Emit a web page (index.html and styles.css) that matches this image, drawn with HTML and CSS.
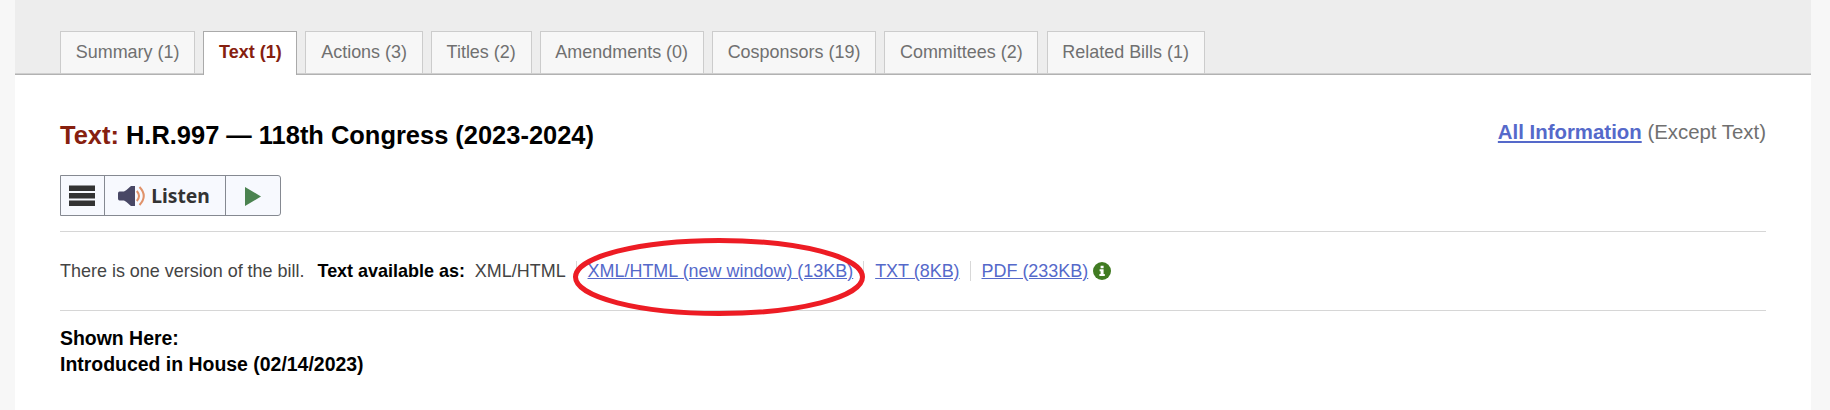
FILE: index.html
```html
<!DOCTYPE html>
<html lang="en">
<head>
<meta charset="utf-8">
<title>Text - H.R.997 - 118th Congress (2023-2024)</title>
<link rel="stylesheet" href="styles.css">
</head>
<body>
<main class="page">
  <nav class="tabs">
    <a class="tab">Summary (1)</a>
    <a class="tab active">Text (1)</a>
    <a class="tab">Actions (3)</a>
    <a class="tab">Titles (2)</a>
    <a class="tab">Amendments (0)</a>
    <a class="tab">Cosponsors (19)</a>
    <a class="tab">Committees (2)</a>
    <a class="tab">Related Bills (1)</a>
  </nav>
  <section class="content">
    <header class="heading">
      <h1 class="title"><span class="label">Text:</span> H.R.997 — 118th Congress (2023-2024)</h1>
      <p class="all-info"><a class="link" href="#">All Information</a> (Except Text)</p>
    </header>
    <div class="reader">
      <button class="reader-menu" aria-label="Menu">
        <svg width="26" height="22" viewBox="0 0 26 22" fill="#333"><path d="M0 .5h26V6H0zM0 8h26v5.500H0zM0 15.500h26V21H0z"/></svg>
      </button>
      <button class="reader-listen">
        <svg width="28" height="22" viewBox="0 0 28 22"><path d="M1.5 6.5H6C9 5.5 11 2 13 1H17V21H13C11 20 9 16.500 6 15.500H1.500Q0 15.500 0 13.500V8.500Q0 6.500 1.500 6.500Z" fill="#484765"/><path d="M18.800 6Q23.200 11 18.800 16M21.500 2Q30 11 21.500 20" fill="none" stroke="#e0926a" stroke-width="2"/></svg>
        <span class="listen">Listen</span>
      </button>
      <button class="reader-play" aria-label="Play">
        <svg width="16" height="19" viewBox="0 0 16 19"><path d="M0 0L16 9.500L0 19Z" fill="#4b8350"/></svg>
      </button>
    </div>
    <div class="versions">
      <span class="count">There is one version of the bill.</span>
      <strong class="available">Text available as:</strong>
      <ul class="formats">
        <li class="format">XML/HTML</li>
        <li class="format circled"><a class="link" href="#">XML/HTML (new window) (13KB)</a>
          <svg class="ring" width="296" height="80" viewBox="0 0 296 80"><ellipse cx="148" cy="40" rx="143.500" ry="36.500" fill="none" stroke="#ed1c24" stroke-width="5"/></svg>
        </li>
        <li class="format"><a class="link" href="#">TXT (8KB)</a></li>
        <li class="format"><a class="link" href="#">PDF (233KB)</a></li>
      </ul>
      <svg class="info" width="18" height="18" viewBox="0 0 18 18"><circle cx="9" cy="9" r="9" fill="#417b22"/><path d="M7.600 3.800h3v2.500h-3zM6.600 7.300h4v4.700h1.200v1.900H6.400V12h1.200V9.200h-1z" fill="#fff"/></svg>
    </div>
    <h2 class="shown">Shown Here:<br>Introduced in House (02/14/2023)</h2>
  </section>
</main>
</body>
</html>
```
FILE: styles.css
```css
* { box-sizing: border-box; }
body {
  margin: 0;
  background: #f7f7f7;
  font-family: "Liberation Sans", Arial, sans-serif;
  font-size: 17.97px;
  color: #444;
}
.page {
  width: 1796px;
  height: 410px;
  margin-left: 15px;
  background: #fff;
  overflow: hidden;
}
.tabs {
  display: flex;
  align-items: flex-end;
  gap: 8.1px;
  height: 75px;
  padding-left: 45px;
  background: #ededed;
  box-shadow: inset 0 -1px #b2b2b2, inset 0 -2px #cfcfcf;
}
.tab {
  height: 43px;
  margin-bottom: 1px;
  padding: 0 14.75px;
  border: 1px solid #ccc;
  border-bottom-color: #cfcfcf;
  background: #f7f7f7;
  color: #707070;
  line-height: 41px;
  white-space: nowrap;
}
.tab.active {
  height: 44px;
  margin-bottom: 0;
  border-color: #aaa;
  border-bottom: 0;
  background: #fff;
  color: #86200f;
  font-weight: bold;
}
.content { padding: 0 45px; }
.heading {
  display: flex;
  justify-content: space-between;
  height: 100px;
  padding-top: 45px;
}
.title {
  margin: 0;
  color: #000;
  font-size: 25.45px;
  line-height: 30px;
}
.label { color: #86200f; }
.all-info {
  margin: 0;
  color: #707070;
  font-size: 20.4px;
  line-height: 24px;
}
.link {
  color: #5569ca;
  text-decoration: underline;
}
.all-info .link { font-weight: bold; }
.reader {
  display: flex;
  width: 221px;
  height: 41px;
  border: 1px solid #858991;
  border-radius: 0 3px 3px 0;
  background: #f7f9fe;
}
.reader button {
  display: flex;
  align-items: center;
  justify-content: center;
  padding: 0;
  border: 0;
  background: none;
}
.reader .reader-menu { width: 43px; padding-right: 1px; }
.reader .reader-listen {
  width: 122px;
  gap: 5px;
  padding-right: 2px;
  border: solid #858991;
  border-width: 0 1px;
}
.reader .reader-play { width: 54px; padding-top: 2px; }
.listen {
  color: #333;
  font: bold 19.3px/28px "Noto Sans", "Open Sans", sans-serif;
}
.versions {
  display: flex;
  align-items: center;
  height: 80px;
  margin-top: 15px;
  border-top: 1px solid #d6d6d6;
  border-bottom: 1px solid #d6d6d6;
  white-space: nowrap;
}
.available {
  margin-left: 13px;
  color: #000;
}
.formats {
  display: flex;
  margin: 0;
  padding: 0 0 0 10px;
  list-style: none;
}
.format {
  position: relative;
  line-height: 20px;
}
.format + .format {
  margin-left: 10px;
  padding-left: 10.9px;
  border-left: 1px solid #d8d8d8;
}
.ring {
  position: absolute;
  top: -24px;
  left: -6px;
  pointer-events: none;
}
.circled { z-index: 1; }
.info { margin-left: 5px; }
.shown {
  margin: 14px 0 0;
  color: #000;
  font-size: 19.45px;
  line-height: 26px;
}
```
